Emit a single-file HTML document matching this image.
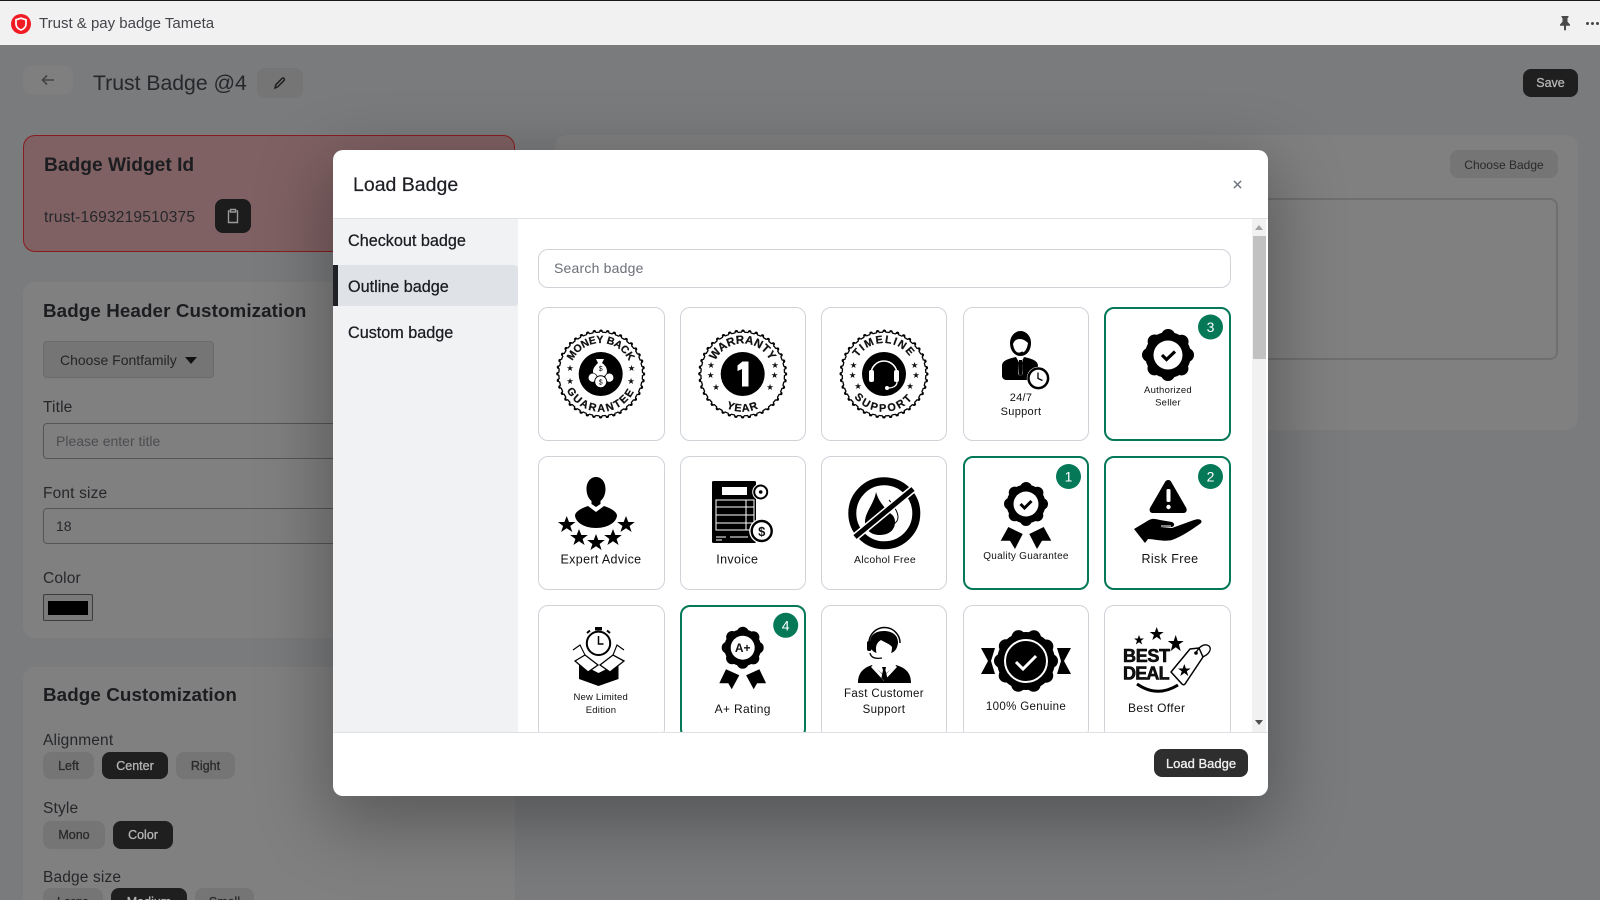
<!DOCTYPE html>
<html lang="en"><head><meta charset="utf-8"><title>Load Badge</title>
<style>
*{box-sizing:border-box}
html,body{margin:0;padding:0;width:1600px;height:900px;overflow:hidden}
body{background:#7a7b7d;font-family:"Liberation Sans",sans-serif;color:#17181a}
#root{position:relative;width:1600px;height:900px;overflow:hidden;background:#7a7b7d}
.a{position:absolute;white-space:nowrap}
.t{position:absolute;white-space:nowrap;line-height:1}
.card{position:absolute;background:#808080;border-radius:12px}
.b{position:absolute;border-radius:8px;background:#757575;color:#2a2a2a;font-size:12.5px;-webkit-text-stroke:.3px;display:flex;align-items:center;justify-content:center}
.b.on{background:#1f1f1f;color:#b5b5b5}
.lb{position:absolute;left:43px;font-size:15.5px;line-height:16px;color:#26272a;letter-spacing:.15px}
.h{position:absolute;left:43px;font-size:18.8px;line-height:24px;font-weight:700;color:#1c1d20;letter-spacing:.1px}
.in{position:absolute;left:43px;width:400px;height:36px;border:1px solid #555;border-radius:4px;background:#7f7f7f;font-size:14px;line-height:34px;padding-left:12px;color:#4c4d50}
#modal{position:absolute;left:333px;top:150px;width:935px;height:646px;background:#fff;border-radius:10px;box-shadow:0 22px 70px 8px rgba(0,0,0,.3);overflow:hidden}
#side{position:absolute;left:0;top:69px;width:185px;height:513px;background:#f1f2f4}
.si{position:absolute;left:15px;font-size:16.2px;line-height:20px;color:#1a1c20;-webkit-text-stroke:.25px}
#scroll{position:absolute;left:185px;top:69px;width:750px;height:513px;overflow:hidden;background:#fff}
.c{position:absolute;width:126px;height:134px;border:1px solid #cfd3d8;border-radius:10px;background:#fff;overflow:hidden}
.c.s{border:2px solid #047857}
.c svg{position:absolute;left:-1px;top:-1px;display:block;overflow:visible}
.c.s svg{left:-2px;top:-2px}
svg text{font-family:"Liberation Sans","DejaVu Sans",sans-serif;fill:#111}
.n{fill:#047857}
.nt{fill:#fff!important;font-size:14px;text-anchor:middle}
.m{text-anchor:middle}
.arc{font-size:10.8px;font-weight:700;letter-spacing:1px;text-anchor:middle;stroke:#111;stroke-width:.25px}
.st{font-size:8.5px;text-anchor:middle;font-family:"DejaVu Sans",sans-serif}
</style></head>
<body>
<div id="root">
<!-- top bar -->
<div class="a" style="left:0;top:0;width:1600px;height:45px;background:#f1f1f1;border-top:1px solid #1a1a1a"></div>
<svg class="a" style="left:10px;top:13px" width="22" height="22" viewBox="0 0 22 22"><circle cx="11" cy="11" r="10" fill="#f01c24"/><path d="M11 5.2l5 1.6v4.2c0 3-2.2 5-5 6-2.8-1-5-3-5-6V6.800z" fill="none" stroke="#fff" stroke-width="1.700"/></svg>
<div class="t" style="left:39px;top:16px;font-size:15px;color:#43454a">Trust &amp; pay badge Tameta</div>
<svg class="a" style="left:1558px;top:15px" width="14" height="16" viewBox="0 0 14 16"><path d="M3.500 1h7v1.300l-1 1v3.500l2.500 2.700v1.300H8v4l-1 1-1-1v-4H2v-1.300l2.500-2.700V3.300l-1-1z" fill="#4a4a4a"/></svg>
<div class="a" style="left:1586px;top:22px;width:3px;height:3px;border-radius:50%;background:#444;box-shadow:5px 0 #444,10px 0 #444"></div>

<!-- page header -->
<div class="a" style="left:23px;top:66px;width:50px;height:28px;background:#7f7f80;border-radius:8px"></div>
<svg class="a" style="left:40px;top:73px" width="16" height="14" viewBox="0 0 16 14"><path d="M14 7H2.500M7 2.500L2.500 7 7 11.500" fill="none" stroke="#444" stroke-width="1.600"/></svg>
<div class="t" style="left:93px;top:73px;font-size:21.200px;color:#26272a">Trust Badge @4</div>
<div class="a" style="left:257px;top:68px;width:46px;height:30px;background:#757575;border-radius:8px"></div>
<svg class="a" style="left:272px;top:75px" width="16" height="16" viewBox="0 0 16 16"><path d="M3 13l.8-3.200 6.200-6.300c.6-.6 1.500-.6 2 0 .6.600.6 1.400 0 2l-6.200 6.300z" fill="none" stroke="#1e1e1e" stroke-width="1.500"/></svg>
<div class="b on" style="left:1523px;top:69px;width:55px;height:28px">Save</div>

<!-- left cards -->
<div class="card" style="left:23px;top:135px;width:492px;height:117px;background:#7f6163;border:1px solid #8a1c1e"></div>
<div class="t" style="left:44px;top:156px;font-size:19.200px;font-weight:700;color:#1c1d20">Badge Widget Id</div>
<div class="t" style="left:44px;top:210px;font-size:15.500px;color:#26272a;letter-spacing:.2px">trust-1693219510375</div>
<div class="a" style="left:215px;top:199px;width:36px;height:34px;background:#1c1c1c;border-radius:8px"></div>
<svg class="a" style="left:226px;top:208px" width="14" height="16" viewBox="0 0 14 16"><path d="M3.500 3H2.500v11.500h9V3h-1M4.500 1.500h5V4h-5z" fill="none" stroke="#9a9a9a" stroke-width="1.400"/></svg>

<div class="card" style="left:23px;top:282px;width:492px;height:356px"></div>
<div class="h" style="top:299px">Badge Header Customization</div>
<div class="a" style="left:43px;top:341px;width:171px;height:37px;background:#757575;border:1px solid #6a6a6a;border-radius:4px"></div>
<div class="t" style="left:60px;top:353px;font-size:14px;color:#252528">Choose Fontfamily</div>
<svg class="a" style="left:185px;top:357px" width="12" height="7"><path d="M0 0h12L6 7z" fill="#111"/></svg>
<div class="lb" style="top:400px">Title</div>
<div class="in" style="top:423px">Please enter title</div>
<div class="lb" style="top:486px">Font size</div>
<div class="in" style="top:508px;color:#26272a">18</div>
<div class="lb" style="top:571px">Color</div>
<div class="a" style="left:43px;top:594px;width:50px;height:27px;border:1px solid #3c3c3c;border-radius:2px;background:#7a7a7a"></div>
<div class="a" style="left:48px;top:601px;width:40px;height:14px;background:#000"></div>

<div class="card" style="left:23px;top:667px;width:492px;height:233px;border-radius:12px 12px 0 0"></div>
<div class="h" style="top:683px">Badge Customization</div>
<div class="lb" style="top:733px">Alignment</div>
<div class="b" style="left:43px;top:752px;width:51px;height:27px">Left</div>
<div class="b on" style="left:102px;top:752px;width:66px;height:27px">Center</div>
<div class="b" style="left:176px;top:752px;width:59px;height:27px">Right</div>
<div class="lb" style="top:801px">Style</div>
<div class="b" style="left:43px;top:821px;width:62px;height:28px">Mono</div>
<div class="b on" style="left:113px;top:821px;width:60px;height:28px">Color</div>
<div class="lb" style="top:870px">Badge size</div>
<div class="a" style="left:0;top:888px;width:300px;height:12px;overflow:hidden">
  <div class="b" style="left:43px;top:0;width:60px;height:28px">Large</div>
  <div class="b on" style="left:111px;top:0;width:76px;height:28px">Medium</div>
  <div class="b" style="left:195px;top:0;width:59px;height:28px">Small</div>
</div>

<!-- right card -->
<div class="card" style="left:555px;top:135px;width:1023px;height:295px"></div>
<div class="b" style="left:1450px;top:150px;width:108px;height:28px;font-size:12px;-webkit-text-stroke:0;padding-top:1px">Choose Badge</div>
<div class="a" style="left:575px;top:198px;width:983px;height:162px;border:2px solid #6f6f6f;border-radius:8px"></div>

<!-- modal -->
<div id="modal">
  <div class="t" style="left:20px;top:26px;font-size:19.500px;color:#1d1f24;-webkit-text-stroke:.2px">Load Badge</div>
  <svg class="a" style="left:900px;top:30px" width="9" height="9" viewBox="0 0 10 10"><path d="M1 1l8 8M9 1L1 9" stroke="#6b7280" stroke-width="1.600"/></svg>
  <div class="a" style="left:0;top:68px;width:935px;height:1px;background:#dfe1e4"></div>
  <div class="a" style="left:0;top:582px;width:935px;height:1px;background:#dfe1e4"></div>
  <div id="side">
    <div class="si" style="top:12px">Checkout badge</div>
    <div class="a" style="left:0;top:46px;width:185px;height:41px;background:#dfe2e6;border-left:5px solid #1f2126;border-radius:0 4px 4px 0"></div>
    <div class="si" style="top:58px">Outline badge</div>
    <div class="si" style="top:104px">Custom badge</div>
  </div>
  <div id="scroll">
    <div class="a" style="left:20px;top:30px;width:693px;height:39px;border:1px solid #cfd3d8;border-radius:10px;font-size:14px;line-height:37px;padding-left:15px;color:#6b7078;letter-spacing:.2px">Search badge</div>

    <!-- row 1 -->
    <div class="c" style="left:20px;top:88px;width:127px"><svg width="127" height="133"><defs><path id="t1" d="M31.700 67a31 31 0 0 1 62 0"/><path id="b1" d="M25 67a37.700 37.700 0 0 0 75.400 0"/></defs>
      <circle cx="62.700" cy="67" r="42.500" fill="#000"/><circle cx="62.700" cy="67" r="42.700" fill="none" stroke="#000" stroke-width="3.600" stroke-linecap="round" stroke-dasharray="0 6.707"/><circle cx="62.700" cy="67" r="41.200" fill="#fff"/><circle cx="62.700" cy="67" r="41" fill="none" stroke="#fff" stroke-width="2.500" stroke-linecap="round" stroke-dasharray="0 6.440"/><circle cx="62.700" cy="67" r="22" fill="#000"/>
      <text class="arc" style="font-size:10.500px;letter-spacing:-.1px"><textPath href="#t1" startOffset="50%">MONEY BACK</textPath></text><text class="arc" style="letter-spacing:1.800px"><textPath href="#b1" startOffset="50%">GUARANTEE</textPath></text>
      <path d="M58 52h8l-2 4c3 2 5 5 5 8 0 4-3 6-7 6s-7-2-7-6c0-3 3-6 5-8z" fill="#fff"/><circle cx="54.700" cy="70.700" r="4.500" fill="#fff" stroke="#000" stroke-width=".7"/><circle cx="71.300" cy="70.700" r="4.500" fill="#fff" stroke="#000" stroke-width=".7"/><circle cx="62.700" cy="74.700" r="6" fill="#fff" stroke="#000"/>
      <text class="m" x="62.700" y="64" style="font-size:7px;fill:#000">$</text><text class="m" x="62.700" y="77.500" style="font-size:7px;fill:#000">$</text>
      <text class="st" x="32" y="64">★</text><text class="st" x="32" y="77">★</text><text class="st" x="93.500" y="64">★</text><text class="st" x="93" y="77">★</text></svg></div>

    <div class="c" style="left:162px;top:88px"><svg width="127" height="133"><defs><path id="t2" d="M32.200 67a30.500 30.500 0 0 1 61 0"/><path id="b2" d="M25 67a37.700 37.700 0 0 0 75.400 0"/></defs>
      <circle cx="62.700" cy="67" r="42.500" fill="#000"/><circle cx="62.700" cy="67" r="42.700" fill="none" stroke="#000" stroke-width="3.600" stroke-linecap="round" stroke-dasharray="0 6.707"/><circle cx="62.700" cy="67" r="41.200" fill="#fff"/><circle cx="62.700" cy="67" r="41" fill="none" stroke="#fff" stroke-width="2.500" stroke-linecap="round" stroke-dasharray="0 6.440"/><circle cx="62.700" cy="67" r="22" fill="#000"/>
      <text class="arc" style="font-size:11.500px;letter-spacing:.2px"><textPath href="#t2" startOffset="50%">WARRANTY</textPath></text><text class="arc"><textPath href="#b2" startOffset="50%">YEAR</textPath></text>
      <path d="M57.500 58.500l5-4h6v25h-6.500v-17.500l-4.500 2z" fill="#fff"/>
      <text class="st" x="31" y="61">★</text><text class="st" x="30.500" y="71">★</text><text class="st" x="36" y="83">★</text><text class="st" x="95" y="61">★</text><text class="st" x="94.500" y="71">★</text><text class="st" x="90" y="83">★</text></svg></div>

    <div class="c" style="left:303px;top:88px"><svg width="127" height="133"><defs><path id="t3" d="M32 67a31 31 0 0 1 62 0"/><path id="b3" d="M25.300 67a37.700 37.700 0 0 0 75.400 0"/></defs>
      <circle cx="63" cy="67" r="42.500" fill="#000"/><circle cx="63" cy="67" r="42.700" fill="none" stroke="#000" stroke-width="3.600" stroke-linecap="round" stroke-dasharray="0 6.707"/><circle cx="63" cy="67" r="41.200" fill="#fff"/><circle cx="63" cy="67" r="41" fill="none" stroke="#fff" stroke-width="2.500" stroke-linecap="round" stroke-dasharray="0 6.440"/><circle cx="63" cy="67" r="22" fill="#000"/>
      <text class="arc" style="letter-spacing:1.500px"><textPath href="#t3" startOffset="50%">TIMELINE</textPath></text><text class="arc" style="letter-spacing:2.300px"><textPath href="#b3" startOffset="50%">SUPPORT</textPath></text>
      <path d="M50 67a13 13 0 0 1 26 0" fill="none" stroke="#fff" stroke-width="1.600"/><rect x="48" y="63" width="5" height="12" rx="2" fill="#fff"/><rect x="73" y="63" width="5" height="12" rx="2" fill="#fff"/><path d="M55 68c2-6 14-6 16 0l-3 9h-10z" fill="#000"/><path d="M76 75c0 4-4 6-9 6" fill="none" stroke="#fff" stroke-width="1.300"/><circle cx="66" cy="81" r="2" fill="#fff"/>
      <text class="st" x="32.500" y="61">★</text><text class="st" x="31.500" y="71">★</text><text class="st" x="37" y="82">★</text><text class="st" x="93.500" y="61">★</text><text class="st" x="95" y="71">★</text><text class="st" x="89" y="82">★</text></svg></div>

    <div class="c" style="left:445px;top:88px"><svg width="127" height="133">
      <path d="M47 36c0-7 5-12 10.500-12S68 29 68 36c0 7-4 13-10.500 13S47 43 47 36z" fill="#000"/><path d="M50 37c1-3 3-5 7-5 3 0 6 2 8 4-1 6-3 10-7.500 10S51 43 50 37z" fill="#fff"/><path d="M52 46c3 1 6 0 8-1" fill="none" stroke="#000" stroke-width="1.300"/>
      <path d="M39 59c0-5 5-7 14-9l4 7 4-7c9 2 14 4 14 9v14H43c-2 0-4-2-4-4z" fill="#000"/><path d="M53 50l4.500 5 4.500-5-2 2-1 4 1 11-2.500 2-2.500-2 1-11-1-4z" fill="#fff"/><path d="M56 53h3l.6 14-2 2-2-2z" fill="#000"/>
      <circle cx="75.300" cy="71.300" r="11.500" fill="#fff"/><circle cx="75.300" cy="71.300" r="9.800" fill="#fff" stroke="#000" stroke-width="2.500"/><path d="M75 65.500v6l4.500 2" fill="none" stroke="#000" stroke-width="1.300"/>
      <text class="m" x="58" y="94" font-size="11" letter-spacing=".3">24/7</text><text class="m" x="58" y="108" font-size="11" letter-spacing=".3">Support</text></svg></div>

    <div class="c s" style="left:586px;top:88px;width:127px"><svg width="127" height="133">
      <circle cx="64" cy="48" r="23" fill="#000"/><circle cx="64" cy="48" r="19" fill="none" stroke="#000" stroke-width="14" stroke-linecap="round" stroke-dasharray="0 14.923"/><circle cx="64" cy="48" r="14.500" fill="#fff"/><path d="M58 48l4.500 4.500L71 44.500" fill="none" stroke="#000" stroke-width="3.200"/>
      <text class="m" x="64" y="86" font-size="9.500" letter-spacing=".25">Authorized</text><text class="m" x="64" y="98.500" font-size="9.500" letter-spacing=".25">Seller</text>
      <circle class="n" cx="106.500" cy="20" r="12.500"/><text class="nt" x="106.500" y="25.200">3</text></svg></div>

    <!-- row 2 -->
    <div class="c" style="left:20px;top:237px;width:127px"><svg width="127" height="133">
      <path d="M48.500 33c0-7 4-12 9.500-12s9.500 5 9.500 12c0 6-2.500 10-5 12v3l-4.500 3-4.500-3v-3c-2.500-2-5-6-5-12z" fill="#000"/><path d="M50 50L58 56l8-6c6 2 12 5 13 9 0 7-9 13-21 13s-21-6-21-13c1-4 7-7 13-9z" fill="#000"/>
      <polygon fill="#000" points="28.700,60 31,66 37.500,66 32.300,70 34.300,76 28.700,72.300 23.100,76 25.100,70 20,66 26.400,66"/>
      <polygon fill="#000" points="41,73 43.300,79 49.800,79 44.600,83 46.600,89 41,85.300 35.400,89 37.400,83 32.200,79 38.700,79"/>
      <polygon fill="#000" points="58,78 60.300,84 66.800,84 61.600,88 63.600,94 58,90.300 52.400,94 54.400,88 49.200,84 55.700,84"/>
      <polygon fill="#000" points="75,73 77.300,79 83.800,79 78.600,83 80.600,89 75,85.300 69.400,89 71.400,83 66.200,79 72.700,79"/>
      <polygon fill="#000" points="88,60 90.300,66 96.800,66 91.600,70 93.600,76 88,72.300 82.400,76 84.400,70 79.200,66 85.700,66"/>
      <text class="m" x="63" y="107.500" font-size="12.500" letter-spacing=".35">Expert Advice</text></svg></div>

    <div class="c" style="left:162px;top:237px"><svg width="127" height="133">
      <rect x="32" y="25" width="44" height="62" rx="1.500" fill="#000"/><rect x="42" y="31" width="25" height="8" fill="#fff"/>
      <path d="M36 44h38M36 51h38M36 59h38M36 67h38M36 74h38" stroke="#fff" stroke-width="1"/><path d="M36 44h38v30H36z" fill="none" stroke="#fff"/><path d="M66 44v30" stroke="#fff"/>
      <path d="M36 81h10M36 84h6M50 81h18" stroke="#fff" stroke-width="1"/>
      <circle cx="80.700" cy="36" r="8.500" fill="#fff"/><circle cx="80.700" cy="36" r="6.500" fill="#fff" stroke="#000" stroke-width="2"/><circle cx="80.700" cy="36" r="1.800" fill="#000"/>
      <circle cx="81.700" cy="75" r="12.500" fill="#fff"/><circle cx="81.700" cy="75" r="10" fill="#fff" stroke="#000" stroke-width="2.400"/>
      <text class="m" x="81.700" y="80" font-size="13" font-weight="700">$</text>
      <text class="m" x="57.300" y="107.500" font-size="12.500" letter-spacing=".35">Invoice</text></svg></div>

    <div class="c" style="left:303px;top:237px"><svg width="127" height="133">
      <circle cx="63.300" cy="57.300" r="32" fill="none" stroke="#000" stroke-width="8"/>
      <path d="M55 36c-2 12-11 20-11 30 0 8 6 13 15 13s15-5 15-13c0-4-2-7-4-8l-6-6c-4-5-7-9-9-16z" fill="#000"/><path d="M68 44c5 6 9 12 9 17 0 4-2 6-5 7" fill="none" stroke="#000"/>
      <path d="M34 81L92 33" stroke="#fff" stroke-width="8"/><path d="M34 81L92 33" stroke="#000" stroke-width="5"/>
      <text class="m" x="64" y="107" font-size="10.500" letter-spacing=".25">Alcohol Free</text></svg></div>

    <div class="c s" style="left:445px;top:237px"><svg width="127" height="133">
      <circle cx="63" cy="48" r="19.500" fill="#000"/><circle cx="63" cy="48" r="16" fill="none" stroke="#000" stroke-width="12" stroke-linecap="round" stroke-dasharray="0 12.566"/><circle cx="63" cy="48" r="12.500" fill="#fff"/><path d="M57.500 48l4 4 7-7" fill="none" stroke="#000" stroke-width="3"/>
      <polygon fill="#000" points="45.300,71 59.700,78 52,93 47,84.700 37.700,84.700"/><polygon fill="#000" points="80.700,71 66.300,78 74,93 79,84.700 88.300,84.700"/>
      <text class="m" x="63" y="103" font-size="10" letter-spacing=".25">Quality Guarantee</text>
      <circle class="n" cx="105.500" cy="20.500" r="12.500"/><text class="nt" x="105.500" y="25.700">1</text></svg></div>

    <div class="c s" style="left:586px;top:237px;width:127px"><svg width="127" height="133">
      <path d="M64.300 24c1.500 0 2.500 1 3 2l15 26c1 2.500 0 5-3 5H49c-3 0-4-2.500-3-5l15-26c.5-1 1.800-2 3.300-2z" fill="#000"/><rect x="62.500" y="33" width="4" height="13" rx="1.500" fill="#fff"/><circle cx="64.500" cy="51" r="2.200" fill="#fff"/>
      <path d="M30 73l15-9c4-2 7-1 11 0l12 2c3 1 3 5-1 5H56l12 1 22-8c5-2 9 0 7 3-8 6-20 14-29 17-9 2-18-1-24-1l-3 4z" fill="#000"/><path d="M57 70h10" stroke="#fff"/>
      <text class="m" x="66" y="107" font-size="12.500" letter-spacing=".4">Risk Free</text>
      <circle class="n" cx="106.500" cy="20.500" r="12.500"/><text class="nt" x="106.500" y="25.700">2</text></svg></div>

    <!-- row 3 -->
    <div class="c" style="left:20px;top:386px;width:127px"><svg width="127" height="133">
      <rect x="57" y="22" width="7" height="3.500" fill="#000"/><circle cx="60.500" cy="38.300" r="11.700" fill="#fff" stroke="#000" stroke-width="2"/><path d="M60.500 31v8h5" fill="none" stroke="#000" stroke-width="1.500"/><path d="M49 28l3-2.500M72 28l-3-2.500" stroke="#000" stroke-width="2"/>
      <path d="M41 58v16l19.500 7 20-7V58l-20 10z" fill="#000"/><path d="M37 56l10-6 13 10-10 7zM86 56l-11-6-13 10 10 7z" fill="#fff" stroke="#000" stroke-width="1.300"/><path d="M35 45l7-5 5 10M86 45l-7-5-4 10" fill="none" stroke="#000" stroke-width="1.100"/>
      <text class="m" x="62.700" y="95" font-size="9.500" letter-spacing=".2">New Limited</text><text class="m" x="63" y="108" font-size="9.500" letter-spacing=".2">Edition</text></svg></div>

    <div class="c s" style="left:162px;top:386px"><svg width="127" height="133">
      <polygon fill="#000" points="46,64.300 59.300,70.300 51.700,84.300 48.300,78.300 39.300,78.300"/><polygon fill="#000" points="79.400,64.300 66.100,70.300 73.700,84.300 77.100,78.300 86.100,78.300"/>
      <circle cx="62.700" cy="42.700" r="18.500" fill="#000"/><circle cx="62.700" cy="42.700" r="15" fill="none" stroke="#000" stroke-width="12" stroke-linecap="round" stroke-dasharray="0 11.781"/><circle cx="62.700" cy="42.700" r="12" fill="#fff"/>
      <text class="m" x="62.700" y="47" font-size="12" font-weight="700">A+</text>
      <text class="m" x="62.700" y="108" font-size="12" letter-spacing=".35">A+ Rating</text>
      <circle class="n" cx="105.700" cy="20.300" r="12.500"/><text class="nt" x="105.700" y="25.500">4</text></svg></div>

    <div class="c" style="left:303px;top:386px"><svg width="127" height="133">
      <path d="M48 38a15.500 15.500 0 0 1 31 0" fill="none" stroke="#000" stroke-width="1.500"/><path d="M49 37c0-8 7-11 14-11s14 3 14 12c-1 7-4 9-7 10H56c-5-1-7-5-7-11z" fill="#000"/><path d="M55 44c0-5 2-7 5-9 3 2 9 4 11 7 0 7-3 12-8 12s-8-4-8-10z" fill="#fff"/><rect x="46" y="36" width="4.500" height="10" rx="2" fill="#000"/><path d="M49 48c1 5 6 6 12 5" fill="none" stroke="#000" stroke-width="1.300"/>
      <path d="M37 78c0-10 5-15 14-18l12 10 12-10c10 3 15 8 15 18z" fill="#000"/><path d="M52 60l11 11 11-11 2 2-13 14-13-14z" fill="#fff"/><path d="M61 62h4l-.6 3 2 8-3 3-3-3 1.600-8z" fill="#000"/>
      <text class="m" x="63" y="92" font-size="11.500" letter-spacing=".35">Fast Customer</text><text class="m" x="63" y="108" font-size="11.500" letter-spacing=".35">Support</text></svg></div>

    <div class="c" style="left:445px;top:386px"><svg width="127" height="133">
      <path d="M18 43h14l-4 13 4 13H18l7-13zM108 43H94l4 13-4 13h14l-7-13z" fill="#000"/>
      <circle cx="63" cy="56" r="29" fill="#000"/><circle cx="63" cy="56" r="25" fill="none" stroke="#000" stroke-width="14" stroke-linecap="round" stroke-dasharray="0 15.708"/>
      <circle cx="63" cy="56" r="21" fill="none" stroke="#fff" stroke-width="2"/><path d="M53 57l7 7 13-13" fill="none" stroke="#fff" stroke-width="3"/>
      <text class="m" x="63" y="105" font-size="11.500" letter-spacing=".35">100% Genuine</text></svg></div>

    <div class="c" style="left:586px;top:386px;width:127px"><svg width="127" height="133">
      <polygon fill="#000" points="35,30 36.300,33.500 40,33.500 37,35.700 38.100,39.500 35,37.200 31.900,39.500 33,35.700 30,33.500 33.700,33.500"/>
      <polygon fill="#000" points="52.700,22 54.500,27 59.700,27 55.500,30 57.100,35 52.700,32 48.300,35 49.900,30 45.700,27 50.900,27"/>
      <polygon fill="#000" points="71.700,30 73.700,36 79.700,36 74.900,39.500 76.700,46 71.700,42.200 66.700,46 68.500,39.500 63.700,36 69.700,36"/>
      <text x="19" y="57" style="font-size:18px;font-weight:700;letter-spacing:-.3px;stroke:#000;stroke-width:.6px">BEST</text><text x="19" y="74.500" style="font-size:18px;font-weight:700;letter-spacing:-.8px;stroke:#000;stroke-width:.6px">DEAL</text>
      <path d="M33 79q20 14 41 1" fill="none" stroke="#000" stroke-width="3"/>
      <path d="M67 67L86 44l9-1 4 9-18 27c-1 1-2 1-3 0z" fill="#fff" stroke="#000" stroke-width="1.500" stroke-linejoin="round"/><circle cx="92" cy="48" r="1.800" fill="#000"/><path d="M92 48c3-7 9-10 13-7 3 3 0 9-7 11" fill="none" stroke="#000" stroke-width="1.300"/>
      <polygon fill="#000" points="80.300,59 81.900,63.500 86.700,63.500 82.800,66.300 84.300,71 80.300,68 76.300,71 77.800,66.300 73.900,63.500 78.700,63.500"/>
      <text class="m" x="52.700" y="107" font-size="12" letter-spacing=".35">Best Offer</text></svg></div>

    <!-- scrollbar -->
    <div class="a" style="left:734px;top:0;width:14px;height:513px;background:#f1f1f1"></div>
    <div class="a" style="left:735px;top:17px;width:13px;height:123px;background:#c1c1c1"></div>
    <svg class="a" style="left:737px;top:6px" width="8" height="5"><path d="M0 5L4 0l4 5z" fill="#a3a3a3"/></svg>
    <svg class="a" style="left:737px;top:501px" width="8" height="5"><path d="M0 0l4 5 4-5z" fill="#505050"/></svg>
  </div>
  <div class="b" style="left:821px;top:599px;width:94px;height:28px;background:#2e2e2e;color:#f2f2f2;border-radius:8px;font-size:13px">Load Badge</div>
</div>
</div>
</body></html>
